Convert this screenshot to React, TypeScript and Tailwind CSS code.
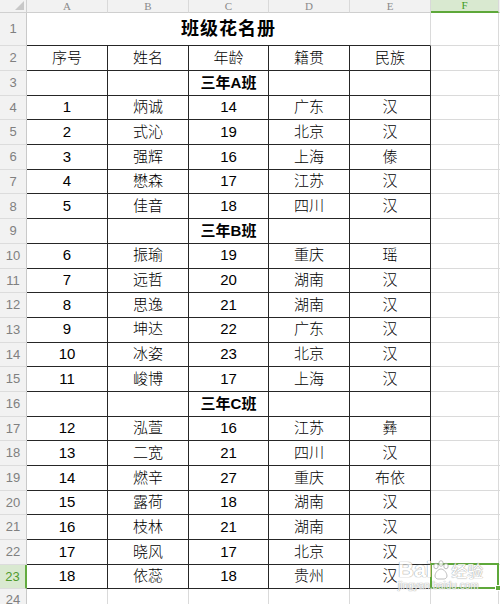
import React from 'react';

type Row = string[];

const cols = ['A', 'B', 'C', 'D', 'E'];

// rows 2..23 of the sheet (row 1 is the merged title)
const rows: Row[] = [
  ['序号', '姓名', '年龄', '籍贯', '民族'],
  ['', '', '三年A班', '', ''],
  ['1', '炳诚', '14', '广东', '汉'],
  ['2', '式沁', '19', '北京', '汉'],
  ['3', '强辉', '16', '上海', '傣'],
  ['4', '懋森', '17', '江苏', '汉'],
  ['5', '佳音', '18', '四川', '汉'],
  ['', '', '三年B班', '', ''],
  ['6', '振瑜', '19', '重庆', '瑶'],
  ['7', '远哲', '20', '湖南', '汉'],
  ['8', '思逸', '21', '湖南', '汉'],
  ['9', '坤达', '22', '广东', '汉'],
  ['10', '冰姿', '23', '北京', '汉'],
  ['11', '峻博', '17', '上海', '汉'],
  ['', '', '三年C班', '', ''],
  ['12', '泓萱', '16', '江苏', '彝'],
  ['13', '二宽', '21', '四川', '汉'],
  ['14', '燃辛', '27', '重庆', '布依'],
  ['15', '露荷', '18', '湖南', '汉'],
  ['16', '枝林', '21', '湖南', '汉'],
  ['17', '晓风', '17', '北京', '汉'],
  ['18', '依蕊', '18', '贵州', '汉'],
];

const font = 'font-["Liberation_Sans","Noto_Sans_CJK_SC",sans-serif]';

function RowHead({ n, active }: { n: number; active?: boolean }) {
  return (
    <div
      className={`flex items-center justify-center border-b border-[#dcdcdc] text-[13px] ${
        active
          ? 'bg-[#d9e9d0] text-[#4f9a2c] border-r-2 border-r-[#62ab3e]'
          : 'bg-[#f2f2f2] text-[#808080] border-r border-r-[#c9c9c9]'
      }`}
    >
      {n}
    </div>
  );
}

export default function App() {
  return (
    <div className={`w-[500px] h-[604px] overflow-hidden bg-white relative ${font}`}>
      <div className="grid grid-cols-[27px_81px_81px_80px_81px_81px_68px_1fr] grid-rows-[13px_33px_25px_repeat(21,24.7px)_1fr] h-full">
        {/* column header */}
        <div className="bg-[#f2f2f2] border-r border-b border-[#d0d0d0] relative">
          <div className="absolute right-[2px] bottom-[2px] w-0 h-0 border-l-[9px] border-l-transparent border-b-[9px] border-b-[#c8c8c8]" />
        </div>
        {cols.map((c) => (
          <div
            key={c}
            className='flex items-center justify-center bg-[#f2f2f2] border-r border-[#d9d9d9] border-b border-b-[#cfcfcf] text-[11px] leading-[12px] text-[#8a8a8a] font-["Liberation_Serif",serif]'
          >
            {c}
          </div>
        ))}
        <div className='flex items-center justify-center bg-[#d9e9d0] border-r border-[#d9d9d9] border-b-2 border-b-[#5ea83a] text-[11px] leading-[11px] text-[#3f9a1c] font-["Liberation_Serif",serif]'>
          F
        </div>
        <div className="bg-[#f2f2f2] border-b border-[#cfcfcf]" />

        {/* row 1: title */}
        <RowHead n={1} />
        <div className="col-span-5 flex items-center justify-center border-b border-b-[#262626] border-r border-r-[#dadada] text-[18px] font-bold text-black tracking-[1px]">
          班级花名册
        </div>
        <div className="border-r border-b border-[#dadada]" />
        <div className="border-b border-[#dadada]" />

        {/* rows 2..23 */}
        {rows.map((r, i) => {
          const n = i + 2;
          const last = n === 23;
          const section = r[2].startsWith('三年');
          return (
            <React.Fragment key={n}>
              <RowHead n={n} active={last} />
              {r.map((v, j) => (
                <div
                  key={j}
                  className={`flex items-center justify-center border-r border-b border-[#262626] text-[15px] text-black ${
                    section && j === 2 ? 'font-bold' : 'font-light'
                  }`}
                >
                  {v}
                </div>
              ))}
              <div className="relative border-r border-b border-[#dadada]">
                {last && (
                  <div className="absolute -left-px -top-[2px] -right-px -bottom-px border-2 border-[#5ea83a]">
                    <div className="absolute -right-[4px] -bottom-[4px] w-[6px] h-[6px] bg-[#5ea83a] border border-white" />
                  </div>
                )}
              </div>
              <div className="border-b border-[#dadada]" />
            </React.Fragment>
          );
        })}

        {/* row 24, cut off */}
        <div className="flex items-start justify-center bg-[#f2f2f2] border-r border-r-[#c9c9c9] text-[13px] text-[#808080] pt-[1px]">
          24
        </div>
        {cols.map((c) => (
          <div key={c} className="border-r border-[#dadada]" />
        ))}
        <div className="border-r border-[#dadada]" />
        <div />
      </div>

      {/* baidu watermark */}
      <div className="absolute left-[398px] top-[559px] flex flex-col items-start pointer-events-none opacity-80">
        <div className="flex items-end text-white [text-shadow:0_0_1px_#8a8a8a,0_0_1px_#8a8a8a]">
          <span className='text-[22px] leading-[22px] font-bold font-["Liberation_Sans",sans-serif]'>Bai</span>
          <svg width="18" height="20" viewBox="0 0 18 20" className="mb-[1px]">
            <g fill="#fff" stroke="#9a9a9a" strokeWidth="0.8">
              <ellipse cx="4" cy="6" rx="2.2" ry="2.8" />
              <ellipse cx="9" cy="3.5" rx="2.2" ry="2.8" />
              <ellipse cx="14" cy="6" rx="2.2" ry="2.8" />
              <path d="M9 9c-3 0-6 4-6 7 0 2 2 3 3 3h6c1 0 3-1 3-3 0-3-3-7-6-7z" />
            </g>
          </svg>
          <span className="text-[16px] leading-[18px] ml-[1px]">经验</span>
        </div>
        <div className="text-[10px] leading-[12px] text-white [text-shadow:0_0_1px_#8a8a8a,0_0_1px_#8a8a8a] -mt-[1px]">
          jingyan.baidu.com
        </div>
      </div>
    </div>
  );
}
